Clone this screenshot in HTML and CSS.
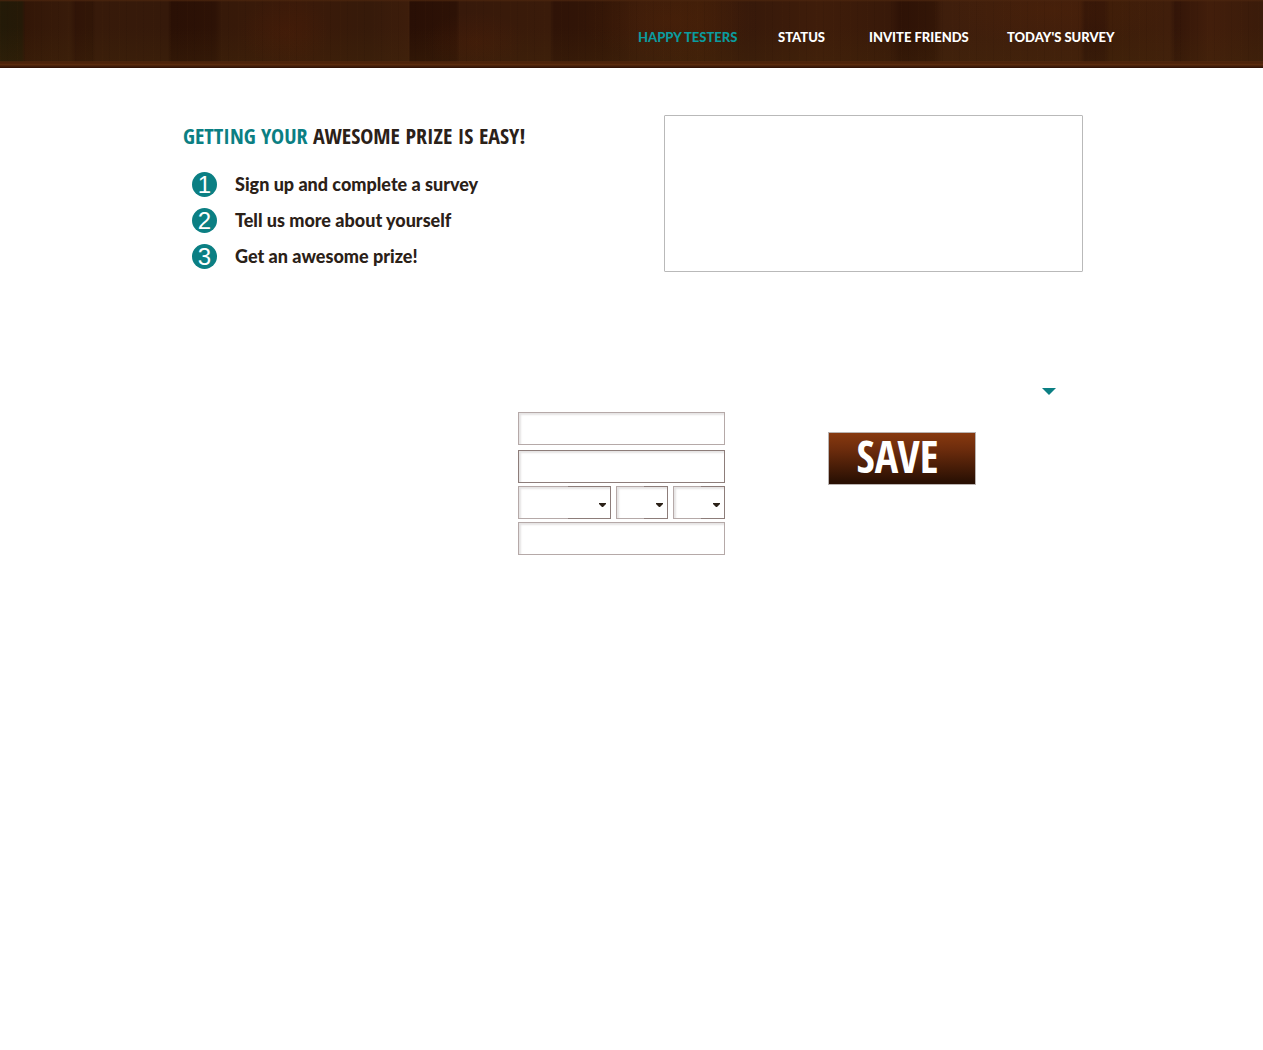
FILE: index.html
```html
<!DOCTYPE html>
<html lang="en">
<head>
<meta charset="utf-8">
<meta name="viewport" content="width=device-width, initial-scale=1">
<title>Happy Testers</title>
<link rel="stylesheet" href="styles.css">
</head>
<body>
<header class="header">
  <nav class="nav" aria-label="Main">
    <a class="nav-link nav-link-active" href="#testers">HAPPY TESTERS</a>
    <a class="nav-link" href="#status">STATUS</a>
    <a class="nav-link" href="#invite">INVITE FRIENDS</a>
    <a class="nav-link" href="#survey">TODAY'S SURVEY</a>
  </nav>
</header>
<main class="page">
  <section class="intro">
    <div class="how">
      <h1 class="title"><span class="title-accent">GETTING YOUR</span> AWESOME PRIZE IS EASY!</h1>
      <ol class="steps">
        <li class="step"><span class="step-number">1</span>Sign up and complete a survey</li>
        <li class="step"><span class="step-number">2</span>Tell us more about yourself</li>
        <li class="step"><span class="step-number">3</span>Get an awesome prize!</li>
      </ol>
    </div>
    <div class="panel"></div>
  </section>
  <form class="profile">
    <div class="fields">
      <input class="field" type="text" aria-label="Name">
      <div class="details">
        <input class="field field-dark" type="text" aria-label="Email">
        <div class="birth">
          <div class="pick"><select class="field select" aria-label="Month"><option></option></select><svg class="caret" viewBox="0 0 7 4"><path d="M0 0H7V1L4 4H3L0 1Z"/></svg></div>
          <div class="pick"><select class="field select" aria-label="Day"><option></option></select><svg class="caret" viewBox="0 0 7 4"><path d="M0 0H7V1L4 4H3L0 1Z"/></svg></div>
          <div class="pick"><select class="field select" aria-label="Year"><option></option></select><svg class="caret" viewBox="0 0 7 4"><path d="M0 0H7V1L4 4H3L0 1Z"/></svg></div>
        </div>
        <input class="field" type="text" aria-label="Zip code">
      </div>
    </div>
    <div class="actions">
      <svg class="pointer" viewBox="0 0 14 7" aria-hidden="true"><path d="M0 0H14L7 7Z"/></svg>
      <button class="save" type="submit">SAVE</button>
    </div>
  </form>
</main>
</body>
</html>
```

FILE: styles.css
```css
* { box-sizing: border-box; }

body {
  margin: 0;
  background: #fff;
  color: #2b2118;
  font-family: Lato, "Open Sans", sans-serif;
}

/* Dark wood: a lit lower edge, fine grain, then broad planks */
.header {
  display: flex;
  justify-content: flex-end;
  align-items: center;
  height: 68px;
  padding: 5px 147px 0 0;
  background:
    linear-gradient(transparent 61px, #5c2c0f 62px, #3c1907 63px, #61300f 64px, #46200b 66px, #2c1005 68px),
    linear-gradient(#4b250e 0, transparent 2px),
    repeating-linear-gradient(90deg, rgba(95, 55, 18, .05) 0 1px, transparent 1px 7px, rgba(20, 5, 0, .07) 7px 8px, transparent 8px 17px),
    radial-gradient(ellipse 45px 35px at 285px 32px, rgba(95, 35, 7, .2), transparent),
    radial-gradient(ellipse 50px 30px at 475px 42px, rgba(95, 35, 7, .2), transparent),
    radial-gradient(ellipse 90px 40px at 670px 20px, rgba(95, 40, 7, .2), transparent),
    radial-gradient(ellipse 120px 35px at 1050px 10px, rgba(95, 40, 7, .2), transparent),
    linear-gradient(transparent 40%, rgba(70, 45, 10, .25) 90%),
    linear-gradient(90deg, #231a08 0, #251907 22px, #321607 25px, #381b0a 70px, #301407 76px, #311607 92px, #371a0a 96px, #35190a 168px, #2a1005 171px, #2d1206 215px, #361909 222px, #3b1a09 300px, #361a0a 370px, #3d1d0b 409px, #290f05 410px, #2d1206 456px, #37190a 460px, #3a1b0a 550px, #2f1307 554px, #331607 605px, #3c1c0a 640px, #401e09 700px, #37190a 750px, #3f1d0a 820px, #381909 890px, #2e1206 900px, #331607 935px, #3e1e0c 942px, #411e0b 1080px, #321508 1085px, #341608 1105px, #3d1d09 1110px, #401e0b 1170px, #331508 1175px, #421e0b 1210px, #3a1b0a 1263px);
}

.nav {
  display: grid;
  grid-template-columns: 140px 91px 138px 109px;
}

.nav-link {
  color: #fff;
  font-size: 13px;
  line-height: 20px;
  font-weight: 900;
  text-decoration: none;
  white-space: nowrap;
}

.nav-link-active { color: #0b9b9e; }

.page {
  max-width: 903px;
  margin: 0 auto;
  padding: 47px 0 47px 3px;
}

.intro {
  display: flex;
  justify-content: space-between;
}

.title {
  margin: 5px 0 19px;
  font-family: "Noto Sans ExtraCondensed", "Open Sans Condensed", "Noto Sans Condensed", "Liberation Sans Narrow", sans-serif;
  font-size: 22px;
  line-height: 30px;
  font-weight: 700;
  white-space: nowrap;
}

.title-accent { color: #0b7f83; }

.steps {
  display: grid;
  gap: 6px;
  margin: 0;
  padding: 0 0 0 9px;
  list-style: none;
}

.step {
  display: flex;
  align-items: center;
  gap: 18px;
  font-size: 18px;
  line-height: 30px;
  font-weight: 900;
}

.step-number {
  width: 25px;
  height: 25px;
  border-radius: 50%;
  background: #0b7f83;
  color: #fff;
  font: 24px/26px "Liberation Sans", sans-serif;
  text-align: center;
}

.panel {
  width: 419px;
  height: 157px;
  border: 1px solid #b9b9b9;
  border-radius: 1px;
}

.profile {
  display: flex;
  gap: 103px;
  padding: 116px 0 0 335px;
}

.fields {
  display: grid;
  align-content: start;
  gap: 5px;
  width: 207px;
  padding-top: 24px;
}

.details {
  display: grid;
  gap: 3px;
}

.birth {
  display: grid;
  grid-template-columns: 93px 52px 52px;
  gap: 5px;
}

.field {
  width: 100%;
  height: 33px;
  margin: 0;
  padding: 4px 8px;
  border: 1px solid #b5a9a8;
  border-radius: 0;
  background: #fff;
  box-shadow: inset 2px 2px 2px #e6e4e4;
  font: 14px/20px Lato, sans-serif;
}

.field-dark { border-color: #8d7d7a; }

.pick {
  display: grid;
  align-items: center;
}

.select,
.caret { grid-area: 1 / 1; }

.select {
  appearance: none;
  border-image: linear-gradient(90deg, #b5a9a8 54%, #8d7d7a 54%) 1;
}

.caret {
  justify-self: end;
  width: 7px;
  height: 4px;
  margin: 4px 5px 0 0;
  fill: #2b2118;
  pointer-events: none;
}

.actions {
  display: grid;
  justify-items: start;
  align-content: start;
  gap: 37px;
  width: 228px;
}

.pointer {
  justify-self: end;
  width: 14px;
  height: 7px;
  fill: #0b7f83;
}

.save {
  width: 148px;
  height: 53px;
  padding: 0 9px 6px 0;
  border: 1px solid #b9b3b1;
  background: linear-gradient(#87390f, #6f2d0d 30%, #2a1003 95%);
  color: #fff;
  font: 700 44px/44px "Open Sans Condensed", "Noto Sans Condensed", "Liberation Sans Narrow", sans-serif;
}
```
